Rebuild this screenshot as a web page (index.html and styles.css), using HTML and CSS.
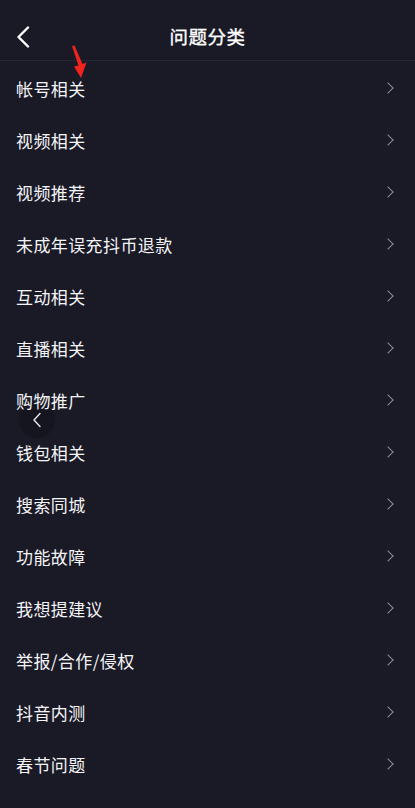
FILE: index.html
```html
<!DOCTYPE html>
<html lang="zh-CN">
<head>
    <meta charset="UTF-8">
    <meta name="viewport" content="width=device-width, initial-scale=1.0">
    <title>问题分类</title>
    <link rel="stylesheet" href="styles.css">
</head>
<body>
    <div class="page">
        <header class="topbar">
            <span class="back">
                <svg width="14" height="22" viewBox="0 0 14 22"><polyline points="12,1.5 2.5,11 12,20.5" fill="none" stroke="#fff" stroke-width="2.4" stroke-linecap="round" stroke-linejoin="round"/></svg>
            </span>
            <h1 class="title">问题分类</h1>
        </header>

        <!-- floating side back button, sits under the list text -->
        <div class="float-back">
            <svg width="10" height="16" viewBox="0 0 10 16"><polyline points="8,1.5 2,8 8,14.5" fill="none" stroke="#e6e6ea" stroke-width="1.4" stroke-linecap="round" stroke-linejoin="round"/></svg>
        </div>

        <ul class="list">
            <li class="row"><span>帐号相关</span><i class="chev"></i></li>
            <li class="row"><span>视频相关</span><i class="chev"></i></li>
            <li class="row"><span>视频推荐</span><i class="chev"></i></li>
            <li class="row"><span>未成年误充抖币退款</span><i class="chev"></i></li>
            <li class="row"><span>互动相关</span><i class="chev"></i></li>
            <li class="row"><span>直播相关</span><i class="chev"></i></li>
            <li class="row"><span>购物推广</span><i class="chev"></i></li>
            <li class="row"><span>钱包相关</span><i class="chev"></i></li>
            <li class="row"><span>搜索同城</span><i class="chev"></i></li>
            <li class="row"><span>功能故障</span><i class="chev"></i></li>
            <li class="row"><span>我想提建议</span><i class="chev"></i></li>
            <li class="row"><span>举报/合作/侵权</span><i class="chev"></i></li>
            <li class="row"><span>抖音内测</span><i class="chev"></i></li>
            <li class="row"><span>春节问题</span><i class="chev"></i></li>
        </ul>

        <!-- red annotation arrow -->
        <svg class="mark" width="20" height="40" viewBox="0 0 20 40">
            <path d="M2 2 L4.5 1.5 L12.5 20 L16.5 18.5 L11 34 L4 22.5 L8.5 21.5 Z" fill="#f0241c"/>
        </svg>
    </div>
</body>
</html>
```

FILE: styles.css
```css
* {
    box-sizing: border-box;
}
body {
    margin: 0;
    background: #1a1a27;
    font-family: "Noto Sans CJK SC", "Noto Sans", sans-serif;
    color: #fff;
}
.page {
    position: relative;
    width: 415px;
    min-height: 808px;
    overflow: hidden;
}
.topbar {
    height: 61px;
    display: flex;
    align-items: center;
    justify-content: center;
    position: relative;
    border-bottom: 1px solid #252533;
    padding-top: 12px;
}
.back {
    position: absolute;
    left: 16px;
    top: 26px;
    display: flex;
}
.title {
    margin: 0;
    font-size: 18.5px;
    font-weight: 400;
    letter-spacing: 0.5px;
    line-height: 24px;
    -webkit-text-stroke: 0.35px #fff;
}
.list {
    list-style: none;
    margin: 0;
    padding: 1px 0 0;
    position: relative;
    z-index: 1;
}
.row {
    height: 52px;
    display: flex;
    align-items: center;
    justify-content: space-between;
    padding: 0 23px 0 16px;
    font-size: 17px;
    letter-spacing: 0.4px;
    color: #f4f4f6;
}
.chev {
    width: 8px;
    height: 8px;
    border-top: 1.5px solid #8b8b95;
    border-right: 1.5px solid #8b8b95;
    transform: rotate(45deg);
}
.float-back {
    position: absolute;
    left: 19px;
    top: 402px;
    width: 36px;
    height: 36px;
    border-radius: 50%;
    background: #15151f;
    display: flex;
    align-items: center;
    justify-content: center;
}
.mark {
    position: absolute;
    left: 70px;
    top: 44px;
    z-index: 2;
}
```
